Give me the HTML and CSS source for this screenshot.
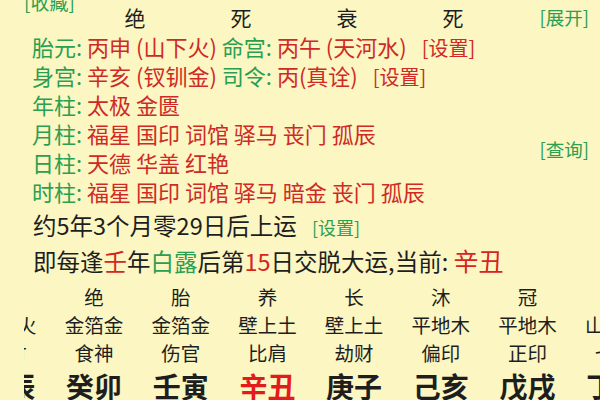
FILE: index.html
```html
<!DOCTYPE html>
<html lang="zh-CN">
<head>
  <meta charset="UTF-8">
  <meta name="viewport" content="width=device-width, initial-scale=1.0">
  <title>排盘</title>
  <link rel="stylesheet" href="styles.css">
</head>
<body>
  <div class="page">
    <div class="fav"><a class="link">[收藏]</a></div>

    <div class="stage-row">
      <span class="stage">绝</span>
      <span class="stage">死</span>
      <span class="stage">衰</span>
      <span class="stage">死</span>
      <a class="link right">[展开]</a>
    </div>

    <div class="info">
      <div class="line">
        <span class="key">胎元:</span> <span class="val">丙申 (山下火)</span>
        <span class="key">命宫:</span> <span class="val">丙午 (天河水)</span>
        <a class="val set">[设置]</a>
      </div>
      <div class="line">
        <span class="key">身宫:</span> <span class="val">辛亥 (钗钏金)</span>
        <span class="key">司令:</span> <span class="val">丙(真诠)</span>
        <a class="val set">[设置]</a>
      </div>

      <div class="pillars">
        <div class="pillar-list">
          <div class="line"><span class="key">年柱:</span> <span class="val">太极 金匮</span></div>
          <div class="line"><span class="key">月柱:</span> <span class="val">福星 国印 词馆 驿马 丧门 孤辰</span></div>
          <div class="line"><span class="key">日柱:</span> <span class="val">天德 华盖 红艳</span></div>
          <div class="line"><span class="key">时柱:</span> <span class="val">福星 国印 词馆 驿马 暗金 丧门 孤辰</span></div>
        </div>
        <a class="link right query">[查询]</a>
      </div>
    </div>

    <div class="luck">
      <div class="luck-line">约5年3个月零29日后上运 <a class="link small">[设置]</a></div>
      <div class="luck-line">即每逢<span class="red">壬</span>年<span class="green">白露</span>后第<span class="red">15</span>日交脱大运,当前: <span class="red big">辛丑</span></div>
    </div>

    <div class="dayun">
      <div class="dayun-track">
        <div class="col">
          <div class="c-stage">墓</div>
          <div class="c-nayin">覆灯火</div>
          <div class="c-god">正财</div>
          <div class="c-gz">甲辰</div>
        </div>
        <div class="col">
          <div class="c-stage">绝</div>
          <div class="c-nayin">金箔金</div>
          <div class="c-god">食神</div>
          <div class="c-gz">癸卯</div>
        </div>
        <div class="col">
          <div class="c-stage">胎</div>
          <div class="c-nayin">金箔金</div>
          <div class="c-god">伤官</div>
          <div class="c-gz">壬寅</div>
        </div>
        <div class="col">
          <div class="c-stage">养</div>
          <div class="c-nayin">壁上土</div>
          <div class="c-god">比肩</div>
          <div class="c-gz current">辛丑</div>
        </div>
        <div class="col">
          <div class="c-stage">长</div>
          <div class="c-nayin">壁上土</div>
          <div class="c-god">劫财</div>
          <div class="c-gz">庚子</div>
        </div>
        <div class="col">
          <div class="c-stage">沐</div>
          <div class="c-nayin">平地木</div>
          <div class="c-god">偏印</div>
          <div class="c-gz">己亥</div>
        </div>
        <div class="col">
          <div class="c-stage">冠</div>
          <div class="c-nayin">平地木</div>
          <div class="c-god">正印</div>
          <div class="c-gz">戊戌</div>
        </div>
        <div class="col">
          <div class="c-stage">临</div>
          <div class="c-nayin">山下火</div>
          <div class="c-god">七杀</div>
          <div class="c-gz">丁酉</div>
        </div>
      </div>
    </div>
  </div>
</body>
</html>
```

FILE: styles.css
```css
html, body {
  margin: 0;
  padding: 0;
}
body {
  font-family: "Noto Sans CJK SC", "Noto Sans", sans-serif;
  background-color: #fbf6c2;
  color: #1e1e1e;
  width: 600px;
  height: 400px;
  overflow: hidden;
}
.page {
  width: 600px;
}
.link {
  color: #2a9f52;
  cursor: pointer;
}
.right {
  margin-left: auto;
  margin-right: 11px;
}
.fav {
  margin-top: -6px;
  height: 16px;
  line-height: 16px;
  font-size: 19px;
  padding-left: 24px;
}
.stage-row {
  display: flex;
  align-items: center;
  height: 14px;
  line-height: 14px;
  padding-left: 82px;
  font-size: 21px;
}
.stage {
  width: 106px;
  text-align: center;
}
.stage-row .link {
  font-size: 18.5px;
}
.info {
  margin-top: 8px;
  padding-left: 32px;
  font-size: 22px;
}
.line {
  line-height: 29px;
  height: 29px;
  white-space: nowrap;
}
.key {
  color: #2a9f52;
}
.val {
  color: #cf2a26;
}
.set {
  margin-left: 10px;
  font-size: 20px;
}
.pillars {
  display: flex;
  align-items: center;
}
.query {
  font-size: 18.5px;
  margin-top: 2px;
}
.luck {
  margin-top: 2px;
  padding-left: 33px;
  font-size: 23.5px;
}
.luck-line {
  height: 35px;
  line-height: 35px;
  white-space: nowrap;
}
.small {
  font-size: 18px;
  margin-left: 10px;
}
.red {
  color: #d8231f;
}
.green {
  color: #2a9f52;
}
.big {
  font-size: 25px;
}
.dayun {
  margin-top: 5px;
  margin-left: 24px;
  overflow: hidden;
}
.dayun-track {
  display: flex;
  margin-left: -60px;
  width: 694px;
}
.col {
  width: 86.7px;
  flex: none;
  text-align: center;
  font-size: 19.5px;
  white-space: nowrap;
}
.c-stage, .c-nayin, .c-god {
  line-height: 28px;
  height: 28px;
}
.c-gz {
  line-height: 38px;
  font-size: 28px;
  font-weight: bold;
}
.current {
  color: #e31b1b;
}
```
